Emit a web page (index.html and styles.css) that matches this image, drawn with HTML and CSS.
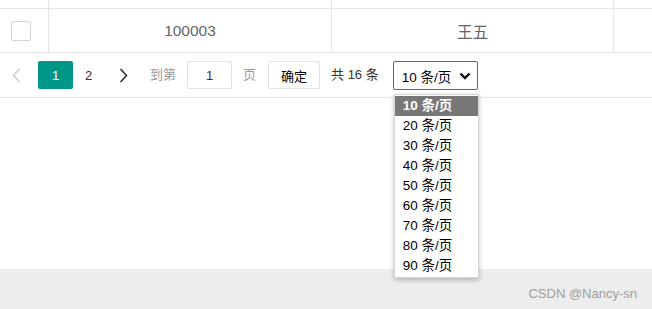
FILE: index.html
```html
<!DOCTYPE html>
<html lang="zh-CN">
<head>
  <meta charset="UTF-8" />
  <title>表格分页</title>
  <link rel="stylesheet" href="styles.css">
</head>
<body>
  <div class="page">
    <div class="content">
      <div class="table">
        <div class="row row-cut">
          <div class="cell"></div>
          <div class="cell"></div>
          <div class="cell"></div>
          <div class="cell cell-last"></div>
        </div>
        <div class="row row-main">
          <div class="cell cell-check"><span class="checkbox"></span></div>
          <div class="cell cell-text">100003</div>
          <div class="cell cell-text">王五</div>
          <div class="cell cell-last"></div>
        </div>
      </div>

      <div class="pager">
        <a class="pg-btn pg-prev">
          <svg width="9" height="15" viewBox="0 0 9 15"><path d="M7.5 1 L1.5 7.5 L7.5 14" fill="none" stroke="#c9c9c9" stroke-width="1.4"/></svg>
        </a>
        <span class="pg-btn pg-curr">1</span>
        <a class="pg-btn pg-num">2</a>
        <a class="pg-btn pg-next">
          <svg width="9" height="15" viewBox="0 0 9 15"><path d="M1.5 1 L7.5 7.5 L1.5 14" fill="none" stroke="#333" stroke-width="1.6"/></svg>
        </a>
        <span class="pg-label pg-skip">到第</span>
        <input class="pg-input" type="text" value="1">
        <span class="pg-label">页</span>
        <button class="pg-go">确定</button>
        <span class="pg-count">共 16 条</span>
        <div class="pg-limit">
          <div class="pg-select">
            <span>10 条/页</span>
            <svg width="12" height="8" viewBox="0 0 12 8"><path d="M1.5 1.5 L6 6 L10.5 1.5" fill="none" stroke="#111" stroke-width="2.4"/></svg>
          </div>
          <ul class="pg-options">
            <li class="active">10 条/页</li>
            <li>20 条/页</li>
            <li>30 条/页</li>
            <li>40 条/页</li>
            <li>50 条/页</li>
            <li>60 条/页</li>
            <li>70 条/页</li>
            <li>80 条/页</li>
            <li>90 条/页</li>
          </ul>
        </div>
      </div>
    </div>

    <div class="footer">
      <span class="watermark">CSDN @Nancy-sn</span>
    </div>
  </div>
</body>
</html>
```

FILE: styles.css
```css
body {
  margin: 0;
  font-family: "Liberation Sans", "Noto Sans CJK SC", sans-serif;
  background: #fff;
  color: #333;
}

.page {
  height: 309px;
  display: flex;
  flex-direction: column;
  overflow: hidden;
}

.content {
  flex: 1;
  background: #fff;
}

/* table */
.row {
  display: grid;
  grid-template-columns: 49px 283px 282px 1fr;
  border-bottom: 1px solid #e6e6e6;
}

.row-cut {
  height: 9px;
  box-sizing: border-box;
}

.row-main {
  height: 44px;
  box-sizing: border-box;
}

.cell {
  border-right: 1px solid #e6e6e6;
  box-sizing: border-box;
}

.cell:first-child {
  box-shadow: 1px 0 2px rgba(0,0,0,0.04);
}

.cell-last {
  border-right: none;
}

.cell-check {
  display: flex;
  align-items: center;
  padding-left: 11px;
}

.checkbox {
  width: 20px;
  height: 20px;
  box-sizing: border-box;
  border: 1px solid #d2d2d2;
  border-radius: 2px;
  background: #fff;
}

.cell-text {
  display: flex;
  align-items: center;
  justify-content: center;
  font-size: 15.5px;
  color: #666;
}

/* pager */
.pager {
  height: 45px;
  box-sizing: border-box;
  border-bottom: 1px solid #e6e6e6;
  padding: 8px 0 0 7px;
  display: flex;
  align-items: flex-start;
  font-size: 13px;
}

.pg-btn {
  height: 28px;
  display: flex;
  align-items: center;
  justify-content: center;
  color: #333;
}

.pg-prev {
  width: 31px;
  justify-content: flex-start;
  padding-left: 5px;
  box-sizing: border-box;
}

.pg-curr {
  width: 35px;
  background: #009688;
  color: #fff;
  border-radius: 2px;
}

.pg-num {
  width: 31px;
}

.pg-next {
  width: 39px;
}

.pg-label {
  height: 28px;
  line-height: 28px;
  color: #999;
}

.pg-skip {
  margin-left: 7px;
}

.pg-input {
  width: 45px;
  height: 28px;
  box-sizing: border-box;
  margin: 0 11px;
  border: 1px solid #e2e2e2;
  border-radius: 2px;
  text-align: center;
  font-family: inherit;
  font-size: 13px;
  color: #333;
  padding: 0;
}

.pg-go {
  width: 52px;
  height: 28px;
  box-sizing: border-box;
  margin-left: 12px;
  border: 1px solid #e2e2e2;
  border-radius: 2px;
  background: #fff;
  font-family: inherit;
  font-size: 13px;
  color: #000;
  padding: 0;
}

.pg-count {
  height: 28px;
  line-height: 28px;
  margin-left: 11px;
  color: #333;
}

.pg-limit {
  position: relative;
  margin-left: 14px;
}

.pg-select {
  width: 85px;
  height: 29px;
  box-sizing: border-box;
  border: 1px solid #009688;
  border-radius: 2px;
  display: flex;
  align-items: center;
  justify-content: space-between;
  padding: 0 6px 0 8px;
  font-size: 13.5px;
  color: #000;
}

.pg-options {
  position: absolute;
  top: 33px;
  left: 1px;
  width: 85px;
  margin: 0;
  padding: 1px 0;
  list-style: none;
  background: #fff;
  border: 1px solid #d6d6d6;
  box-sizing: border-box;
  box-shadow: 0 2px 5px rgba(0,0,0,0.25);
  z-index: 10;
}

.pg-options li {
  height: 20px;
  line-height: 20px;
  padding-left: 8px;
  font-size: 13.5px;
  color: #000;
}

.pg-options li.active {
  background: #777;
  color: #fff;
  font-weight: bold;
}

/* bottom band */
.footer {
  height: 40px;
  background: #ededed;
  display: flex;
  align-items: center;
  justify-content: flex-end;
  padding-right: 15px;
}

.watermark {
  font-size: 13px;
  color: #9d9d9d;
  margin-top: 8px;
}
```
